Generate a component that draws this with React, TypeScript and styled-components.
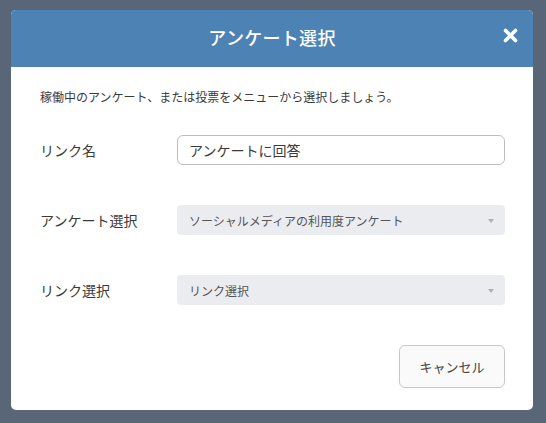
import { FunctionComponent } from "react";
import styled, { createGlobalStyle } from "styled-components";

const GlobalStyle = createGlobalStyle`
  html, body {
    margin: 0;
    padding: 0;
    background: #596677;
  }
  body {
    font-family: "Noto Sans CJK JP", "Noto Sans", sans-serif;
    color: #333;
  }
`;

const Overlay = styled.div`
  width: 546px;
  height: 423px;
  padding: 10px 13px 13px 11px;
  box-sizing: border-box;
  background: #596677;
`;

const Modal = styled.div`
  width: 522px;
  height: 400px;
  background: #fff;
  border-radius: 5px;
  overflow: hidden;
  display: flex;
  flex-direction: column;
`;

const Header = styled.div`
  height: 57px;
  background: #4d82b5;
  display: flex;
  align-items: center;
  justify-content: center;
  position: relative;
  flex-shrink: 0;
`;

const Title = styled.h2`
  margin: 0;
  color: #fff;
  font-size: 18px;
  font-weight: 500;
  letter-spacing: 0.3px;
  line-height: 1;
  margin-top: -3px;
`;

const CloseButton = styled.button`
  position: absolute;
  right: 14px;
  top: 17px;
  width: 17px;
  height: 17px;
  padding: 0;
  border: none;
  background: none;
  display: flex;
  align-items: center;
  justify-content: center;
`;

const Body = styled.div`
  padding: 21px 28px 21px 29px;
  display: flex;
  flex-direction: column;
  flex: 1;
`;

const Intro = styled.p`
  margin: 0 0 29px;
  font-size: 12px;
  line-height: 18px;
  color: #3a3a3a;
`;

const Form = styled.div`
  display: grid;
  grid-template-columns: 137px 1fr;
  grid-auto-rows: 30px;
  row-gap: 40px;
  align-items: center;
`;

const Label = styled.label`
  font-size: 14px;
  color: #3a3a3a;
`;

const TextInput = styled.input`
  height: 30px;
  box-sizing: border-box;
  border: 1px solid #bdbdbd;
  border-radius: 6px;
  padding: 0 11px;
  font-family: inherit;
  font-size: 14px;
  color: #3a3a3a;
  outline: none;
  width: 100%;
`;

const Select = styled.div`
  height: 30px;
  background: #ebecef;
  border-radius: 4px;
  display: flex;
  align-items: center;
  justify-content: space-between;
  padding: 0 11px 0 12px;
  font-size: 12px;
  color: #555;
`;

const Caret = styled.span`
  width: 0;
  height: 0;
  border-left: 3px solid transparent;
  border-right: 3px solid transparent;
  border-top: 4px solid #b0b0b0;
  margin-top: 2px;
`;

const Footer = styled.div`
  display: flex;
  justify-content: flex-end;
  margin-top: 40px;
`;

const CancelButton = styled.button`
  width: 106px;
  height: 43px;
  border: 1px solid #c8c8c8;
  border-radius: 6px;
  background: #fafafa;
  font-family: inherit;
  font-size: 13px;
  color: #444;
  padding: 0;
`;

const App: FunctionComponent = () => {
  return (
    <>
      <GlobalStyle />
      <Overlay>
        <Modal>
          <Header>
            <Title>アンケート選択</Title>
            <CloseButton aria-label="close">
              <svg width="15" height="15" viewBox="0 0 15 15">
                <path d="M2.5 2.5 L12.5 12.5 M12.5 2.5 L2.5 12.5" stroke="#fff" strokeWidth="3.6" strokeLinecap="round" />
              </svg>
            </CloseButton>
          </Header>
          <Body>
            <Intro>稼働中のアンケート、または投票をメニューから選択しましょう。</Intro>
            <Form>
              <Label>リンク名</Label>
              <TextInput defaultValue="アンケートに回答" />
              <Label>アンケート選択</Label>
              <Select>
                <span>ソーシャルメディアの利用度アンケート</span>
                <Caret />
              </Select>
              <Label>リンク選択</Label>
              <Select>
                <span>リンク選択</span>
                <Caret />
              </Select>
            </Form>
            <Footer>
              <CancelButton>キャンセル</CancelButton>
            </Footer>
          </Body>
        </Modal>
      </Overlay>
    </>
  );
};

export default App;
